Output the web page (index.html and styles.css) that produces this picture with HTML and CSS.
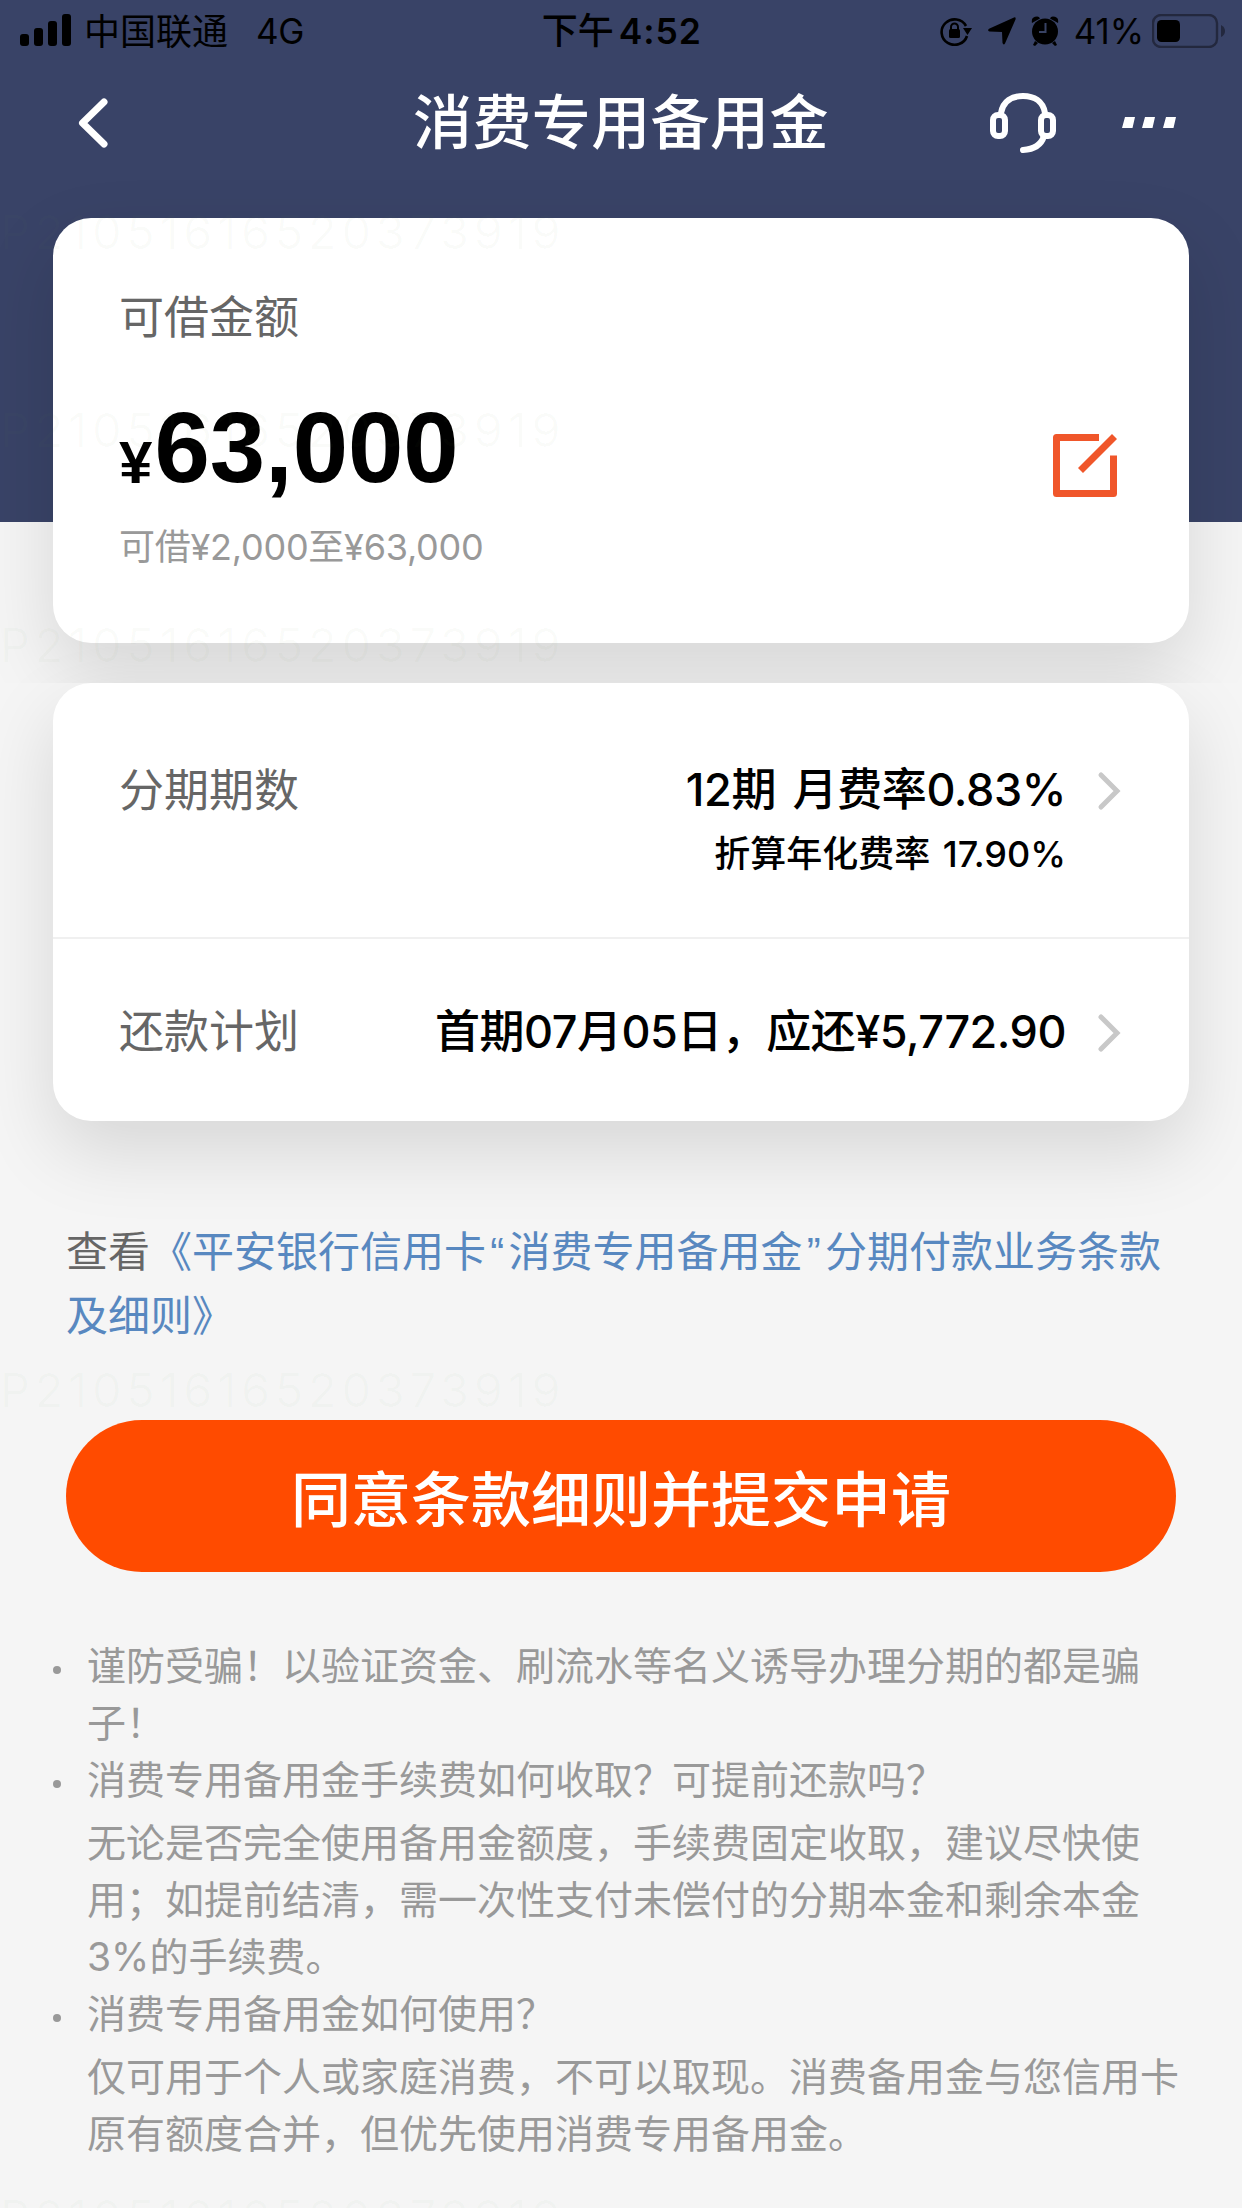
FILE: index.html
```html
<!DOCTYPE html>
<html lang="zh-CN">
<head>
<meta charset="utf-8">
<title>消费专用备用金</title>
<link rel="stylesheet" href="styles.css">
</head>
<body>
<main class="screen">
  <section class="hero">
    <div class="status">
      <div class="status-left">
        <svg class="signal" width="51" height="32" viewBox="0 0 51 32"><rect x="0" y="20" width="9" height="12" rx="3"/><rect x="14" y="14" width="9" height="18" rx="3"/><rect x="28" y="7" width="9" height="25" rx="3"/><rect x="42" y="0" width="9" height="32" rx="3"/></svg>
        <span class="carrier">中国联通</span>
        <span class="network">4G</span>
      </div>
      <div class="clock">下午<span class="digits">4:52</span></div>
      <div class="status-right">
        <svg class="lock" width="32" height="29" viewBox="0 0 32 29"><path d="M26 9A13 12.7 0 1 0 27 19" fill="none" stroke="#000" stroke-width="2.6"/><path d="M23 11h9l-4.500 7z"/><rect x="9" y="12" width="11" height="9" rx="1.500"/><path d="M11 13v-3a3.500 3.500 0 0 1 7 0v3" fill="none" stroke="#000" stroke-width="2"/></svg>
        <svg class="arrow" width="28" height="28" viewBox="0 0 28 28"><path d="M26 .4q2-.6 1.600 1.800L17 26.500q-1.500 2-2.500-.5L14 15 1.500 14.500q-2.500-1-.5-2.700z"/></svg>
        <svg class="alarm" width="28" height="30" viewBox="0 0 28 30"><circle cx="14" cy="15.500" r="13"/><path d="M1 7Q0 2 4 .8 8-.5 9 2.500zM27 7q1-5-3-6.200-4-1.300-5 1.700zM4 25l3 2-3 3-2-1zM24 25l-3 2 3 3 2-1z"/><path d="M14.500 7v9H8" fill="none" stroke="#384263" stroke-width="2"/></svg>
        <span class="percent">41%</span>
        <svg class="battery" width="74" height="34" viewBox="0 0 74 34"><rect x="1" y="1" width="64" height="32" rx="8" fill="none" stroke="#23283e" stroke-width="2.400"/><rect x="5" y="6" width="23" height="22" rx="4.500"/><path d="M69 11q4 2 4 6t-4 6z" fill="#23283e"/></svg>
      </div>
    </div>
    <header class="nav">
      <svg class="back" width="30" height="50" viewBox="0 0 30 50"><path d="M26 4 4.500 25 26 46" fill="none" stroke="#fff" stroke-width="7" stroke-linecap="round" stroke-linejoin="round"/></svg>
      <h1 class="title">消费专用备用金</h1>
      <div class="nav-actions">
        <svg class="headset" width="68" height="62" viewBox="0 0 68 62"><g fill="none" stroke="#fff" stroke-width="6" stroke-linecap="round"><path d="M12 21C14 9 23 4 34 4s20 5 22 17"/><rect x="4" y="23" width="12" height="21" rx="5"/><rect x="52" y="23" width="12" height="21" rx="5"/><path d="M55 44Q51 57 34 58"/></g></svg>
        <svg class="more" width="55" height="12" viewBox="0 0 55 12"><path d="M3 0h10l-2.500 11H0zM23 0h10l-2.500 11H20zM44 0h10l-2.500 11H41z" fill="#fff"/></svg>
      </div>
    </header>
    <article class="card amount-card">
      <div class="amount-main">
        <p class="label">可借金额</p>
        <p class="amount"><span class="yen">¥</span>63,000</p>
        <p class="range">可借¥2,000至¥63,000</p>
      </div>
      <svg class="edit" width="65" height="65" viewBox="0 0 65 65"><g fill="none" stroke="#f0562a" stroke-width="7"><path d="M46 3.500H3.500v56h57V21.500" stroke-linejoin="round"/><path d="M27.500 36.500 61.500 2.500"/></g></svg>
      <span class="watermark wm-1">P21051616520373919</span>
      <span class="watermark wm-2">P21051616520373919</span>
      <span class="watermark wm-3">P21051616520373919</span>
    </article>
  </section>

  <section class="details">
    <div class="card plan-card">
      <div class="row term-row">
        <span class="label">分期期数</span>
        <div class="value">
          <p class="rate">12期 月费率0.83%</p>
          <p class="annual">折算年化费率 17.90%</p>
        </div>
        <svg class="chevron" width="24" height="44" viewBox="0 0 24 44"><path d="M4 6l16 16L4 38" fill="none" stroke="#c8c8c8" stroke-width="5" stroke-linecap="round"/></svg>
      </div>
      <div class="row pay-row">
        <span class="label">还款计划</span>
        <p class="value pay">首期07月05日，应还¥5,772.90</p>
        <svg class="chevron" width="24" height="44" viewBox="0 0 24 44"><path d="M4 6l16 16L4 38" fill="none" stroke="#c8c8c8" stroke-width="5" stroke-linecap="round"/></svg>
      </div>
    </div>

    <p class="terms">查看<a class="link">《平安银行信用卡<span class="quote">“</span>消费专用备用金<span class="quote">”</span>分期付款业务条款<br>及细则》</a></p>
    <button class="submit">同意条款细则并提交申请</button>

    <ul class="notes">
      <li>谨防受骗！以验证资金、刷流水等名义诱导办理分期的都是骗<br>子！</li>
      <li>消费专用备用金手续费如何收取？可提前还款吗？
        <p class="answer">无论是否完全使用备用金额度，手续费固定收取，建议尽快使<br>用；如提前结清，需一次性支付未偿付的分期本金和剩余本金<br>3%的手续费。</p></li>
      <li>消费专用备用金如何使用？
        <p class="answer">仅可用于个人或家庭消费，不可以取现。消费备用金与您信用卡<br>原有额度合并，但优先使用消费专用备用金。</p></li>
    </ul>
    <span class="watermark wm-4">P21051616520373919</span>
    <span class="watermark wm-5">P21051616520373919</span>
  </section>
</main>
</body>
</html>
```

FILE: styles.css
```css
* { box-sizing: border-box; margin: 0; padding: 0; }
body { background: #f5f5f5; }
.screen {
  width: 1242px; height: 2208px; overflow: hidden; color: #000;
  font-family: Inter, "Noto Sans CJK SC", sans-serif;
  font-feature-settings: "calt" 0;
}
svg { display: block; flex: none; }

.hero {
  height: 683px; padding: 0 53px;
  background: linear-gradient(#394367 522px, #f5f5f5 522px);
}
.status { position: relative; display: flex; justify-content: space-between; align-items: center; height: 62px; margin: 0 -37px 0 -33px; font-size: 36px; line-height: 44px; }
.status-left, .status-right { display: flex; align-items: center; }
.carrier { margin: 2px 0 0 13px; }
.signal { margin-top: -2px; }
.network { margin-left: 28px; font-size: 35px; letter-spacing: -.5px; }
.clock { flex: 1; font-weight: 500; padding: 1px 0 0 238px; }
.digits { font-size: 35.5px; font-weight: 600; letter-spacing: .9px; padding-left: 5px; }
.arrow { margin-left: 16px; }
.alarm { margin-left: 15px; }
.percent { margin-left: 15px; font-size: 35px; letter-spacing: -.1px; }
.battery { margin-left: 8px; }

.nav { display: grid; grid-template-columns: 360px 1fr 200px; align-items: center; height: 122px; }
.back { margin-left: 25px; }
.title { color: #fff; font-size: 59px; line-height: 80px; font-weight: 500; letter-spacing: .4px; white-space: nowrap; }
.nav-actions { display: flex; align-items: center; gap: 65px; }

.card { background: #fff; border-radius: 38px; box-shadow: 0 30px 75px rgba(0, 0, 0, .125); }
.amount-card { position: relative; display: flex; justify-content: space-between; height: 425px; margin-top: 34px; padding: 70px 71px 0 66px; overflow: visible; }
.label { color: #666; font-size: 45px; line-height: 60px; }
.amount { height: 150px; padding-top: 45px; line-height: 110px; font-family: "Liberation Sans", sans-serif; font-weight: 700; font-size: 99.5px; }
.yen { font-size: 60px; vertical-align: -1px; margin-right: 2px; }
.range { margin-top: 24px; color: #999; font-size: 36px; line-height: 50px; letter-spacing: -.25px; }
.edit { margin-top: 146px; }

.details { position: relative; height: 1525px; background: #f5f5f5; padding: 0 53px; }
.plan-card { height: 438px; }
.row { display: flex; align-items: flex-start; padding: 0 68px 0 66px; }
.term-row { height: 256px; padding-top: 77px; border-bottom: 2px solid #f0f0f0; }
.term-row .label { padding-top: 1px; }
.pay-row { padding-top: 63px; }
.value { flex: 1; text-align: right; font-weight: 500; }
.rate, .pay { font-size: 45px; line-height: 60px; }
.rate { letter-spacing: -.4px; word-spacing: 5px; }
.pay { letter-spacing: -.5px; }
.annual { font-size: 36px; line-height: 50px; margin-top: 9px; word-spacing: 3px; }
.chevron { margin: 9px 0 0 31px; }

.terms { margin: 100px -10px 0 13px; color: #666; font-size: 42px; line-height: 62.5px; white-space: nowrap; }
.link { color: #5888c0; }
.quote { display: inline-block; width: 22.5px; text-align: center; font-family: "Liberation Sans", sans-serif; }
.submit { display: block; width: 1110px; height: 152px; margin: 73px 0 0 13px; border: 0; border-radius: 76px; background: #ff4b00; color: #fff; font: 500 60px/90px "Noto Sans CJK SC", sans-serif; }

.notes { list-style: none; margin: 65px 0 0 34px; color: #999; font-size: 39px; line-height: 57px; white-space: nowrap; }
.notes li::before { content: ""; float: left; width: 8px; height: 8px; margin: 29px 0 0 -34px; border-radius: 50%; background: #999; }
.answer { margin-top: 6px; }

.watermark { position: absolute; left: 0; color: rgba(110, 150, 90, .028); font: 47px/50px Inter, sans-serif; letter-spacing: 4.7px; white-space: nowrap; pointer-events: none; }
.wm-1, .wm-2, .wm-3 { left: -53px; }
.wm-1 { top: -11px; }
.wm-2 { top: 187px; }
.wm-3 { top: 402px; }
.wm-4 { top: 682px; }
.wm-5 { top: 1509px; }
```
